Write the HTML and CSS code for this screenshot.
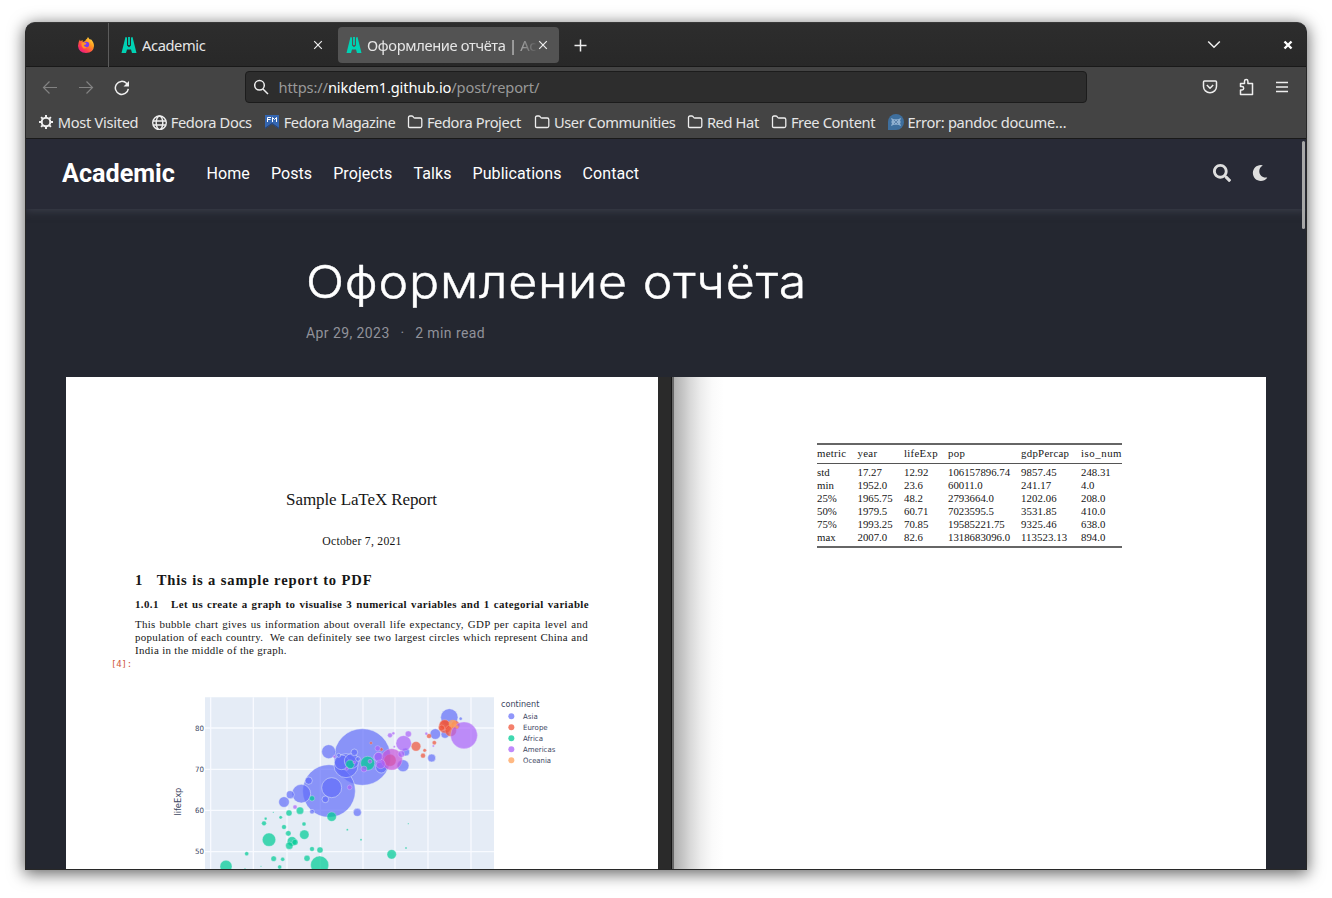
FILE: index.html
```html
<!DOCTYPE html>
<html lang="en">
<head>
<meta charset="utf-8">
<title>Оформление отчёта | Academic</title>
<link rel="stylesheet" href="styles.css">
</head>
<body>
<svg class="defs" width="0" height="0">
  <symbol id="logo" viewBox="0 0 16 18"><path fill="#00d2b4" d="M4.500 1 .5 17H5l1-3.500h4l1 3.500h4.500L11.500 1 10 1.500v8L8 11.200 6 9.500v-8zM7.100 1h1.800v8H7.100z"/></symbol>
  <symbol id="folder" viewBox="0 0 16 16"><path fill="none" stroke="#eee" stroke-width="1.300" stroke-linejoin="round" d="M1.500 12.500V3.500q0-1.500 1.500-1.500h2q1 0 1.500 1.300.3.700 1.200.7h5.600q1.500 0 1.500 1.500v6.500q0 1.500-1.500 1.500H2.800q-1.300 0-1.300-1z"/></symbol>
</svg>
<div class="window">
  <div class="tabs">
    <div class="pinned">
      <svg width="18" height="18" viewBox="0 0 18 18"><defs><linearGradient id="fx" x1="1" y1="0" x2=".2" y2="1"><stop offset="0" stop-color="#fff34f"/><stop offset=".4" stop-color="#ff9a1f"/><stop offset=".75" stop-color="#ff3d4f"/><stop offset="1" stop-color="#e6188c"/></linearGradient></defs><path fill="url(#fx)" d="M11 1q1 2 2.500 3V2.800Q17 6 17 10q-.5 7-8 7-7.500-.5-8-7Q1 6 3 3.500l.5 1.800L5.500 4l.3 2Q9 5 9 3.500 10 3 11 1z"/><circle cx="9.400" cy="8.500" r="2.800" fill="#7b3df0"/><path fill="#ff9425" d="M4.500 7q3.300-1 5 .5Q8.500 9 6.800 9q.5 2.500 3 2Q8 13.500 6 12q-2-2-1.500-5z"/></svg>
    </div>
    <div class="tab"><svg width="16" height="18"><use href="#logo"/></svg><span class="tab-label">Academic</span><svg class="x" width="10" height="10" viewBox="0 0 10 10"><path d="M1.200 1.200l7.600 7.600M8.800 1.200 1.200 8.800"/></svg></div>
    <div class="tab active"><svg width="16" height="18"><use href="#logo"/></svg><span class="tab-label fade">Оформление отчёта | Academic</span><svg class="x" width="10" height="10" viewBox="0 0 10 10"><path d="M1.200 1.200l7.600 7.600M8.800 1.200 1.200 8.800"/></svg></div>
    <svg class="plus" width="13" height="13" viewBox="0 0 13 13"><path d="M6.500.5v12M.5 6.500h12"/></svg>
    <svg class="chev" width="14" height="9" viewBox="0 0 14 9"><path d="M1.200 1.500 7 7.200l5.800-5.700"/></svg>
    <svg class="close" width="10" height="10" viewBox="0 0 10 10"><path d="M1.500 1.500l7 7M8.500 1.500l-7 7"/></svg>
  </div>
  <div class="toolbar">
    <svg class="nav dim" width="16" height="16" viewBox="0 0 16 16"><path d="M15 8.500H1.500M7.500 2.500l-6 6 6 6"/></svg>
    <svg class="nav dim" width="16" height="16" viewBox="0 0 16 16"><path d="M1 8.500h13.500M8.500 2.500l6 6-6 6"/></svg>
    <svg class="nav reload" width="16" height="17" viewBox="0 0 16 17"><path d="M14.300 9.800A6.500 6.500 0 1 1 12.500 4.300L14.300 6"/><path class="solid" d="M15 2v5.500H9.500z"/></svg>
    <div class="url"><svg width="16" height="16" viewBox="0 0 16 16"><circle cx="5.500" cy="6.300" r="4.800"/><path d="m9 10 5 5"/></svg><span class="address">https://<b>nikdem1.github.io</b>/post/report/</span></div>
    <div class="actions">
      <svg width="16" height="16" viewBox="0 0 16 16"><path d="M2.500 2h11q1 0 1 1v4.500a6.500 6.200 0 0 1-13 0V3q0-1 1-1zM4.800 6 8 9.200 11.200 6"/></svg>
      <svg width="16" height="18" viewBox="0 0 16 18"><path d="M1.500 16.500V12H3a1.700 1.700 0 0 0 0-3.400H1.500V5.500h4V3.200a1.700 1.700 0 0 1 3.400 0v2.300h4.600v11z"/></svg>
      <svg width="14" height="14" viewBox="0 0 14 14"><path d="M1 2.500h12M1 7h12M1 11.500h12"/></svg>
    </div>
  </div>
  <div class="bookmarks">
    <span><svg width="16" height="16" viewBox="0 0 16 16"><g stroke="#eee" fill="none"><circle cx="8" cy="8" r="4.300" stroke-width="2"/><path stroke-width="2" d="M8 1v3M8 12v3M1 8h3M12 8h3M3.100 3.100l2 2M10.900 10.900l2 2M3.100 12.900l2-2M10.900 5.100l2-2"/></g></svg>Most Visited</span>
    <span><svg width="16" height="16" viewBox="0 0 16 16"><g stroke="#eee" fill="none" stroke-width="1.400"><circle cx="8.500" cy="8.800" r="6.800"/><ellipse cx="8.500" cy="8.800" rx="3.300" ry="6.800"/><path d="M2 7h13M2 11h13"/></g></svg>Fedora Docs</span>
    <span><svg width="16" height="16" viewBox="0 0 16 16"><path fill="#3566b0" d="M1 1h14v14l-7-5-7 5z"/><path fill="#26406e" d="m1 15 7-5 7 5v-1.300L8 9l-7 4.700z"/><path fill="none" stroke="#fff" d="M3.500 8V3.500H7M3.500 5.500h3M8.500 8V3.500l2 2 2-2V8"/></svg>Fedora Magazine</span>
    <span><svg width="16" height="16"><use href="#folder"/></svg>Fedora Project</span>
    <span><svg width="16" height="16"><use href="#folder"/></svg>User Communities</span>
    <span><svg width="16" height="16"><use href="#folder"/></svg>Red Hat</span>
    <span><svg width="16" height="16"><use href="#folder"/></svg>Free Content</span>
    <span><svg width="16" height="16" viewBox="0 0 16 16"><path fill="#3e6f9e" d="M0 16V8a8 8 0 1 1 8 8z"/><path fill="#8fb0d0" d="m3 4 3 1.200h4L13 4l-1 3 1 1-1 1 1 3-3-1.200H6L3 12l1-3-1-1 1-1z"/><path stroke="#47709c" fill="none" stroke-width=".7" d="m6 6 4 4m0-4-4 4"/></svg>Error: pandoc docume…</span>
  </div>
  <div class="page">
    <nav class="site">
      <strong>Academic</strong>
      <a>Home</a><a>Posts</a><a>Projects</a><a>Talks</a><a>Publications</a><a>Contact</a>
      <svg class="search" width="18" height="18" viewBox="0 0 512 512"><path fill="#dedede" d="M505 442.700 405.300 343c-4.500-4.500-10.600-7-17-7H372c27.600-35.300 44-79.700 44-128C416 93.100 322.900 0 208 0S0 93.100 0 208s93.100 208 208 208c48.300 0 92.700-16.400 128-44v16.300c0 6.400 2.500 12.500 7 17l99.700 99.700c9.400 9.400 24.600 9.400 33.900 0l28.300-28.300c9.400-9.400 9.400-24.600.1-34zM208 336c-70.700 0-128-57.200-128-128 0-70.700 57.200-128 128-128 70.700 0 128 57.200 128 128 0 70.700-57.200 128-128 128z"/></svg>
      <svg class="moon" width="18" height="18" viewBox="0 0 512 512"><path fill="#dedede" d="M283.200 512c79 0 151.100-35.900 198.900-94.800 7.100-8.700-.6-21.400-11.600-19.400-124.200 23.700-238.300-71.600-238.300-197 0-72.200 38.700-138.600 101.500-174.400 9.700-5.500 7.300-20.200-3.800-22.200A258.200 258.200 0 0 0 283.200 0c-141.300 0-256 114.500-256 256 0 141.300 114.500 256 256 256z"/></svg>
    </nav>
    <header class="article">
      <h1>Оформление отчёта</h1>
      <div class="meta"><span>Apr 29, 2023</span><span class="dot">·</span><span>2 min read</span></div>
    </header>
    <div class="featured">
      <section class="sheet">
        <div class="doc-title"><span>Sample LaTeX Report</span></div>
        <div class="doc-date"><span>October 7, 2021</span></div>
        <h2><i>1</i>This is a sample report to PDF</h2>
        <h3><i>1.0.1</i><span>Let us create a graph to visualise 3 numerical variables and 1 categorial variable</span></h3>
        <div class="para"><p>This bubble chart gives us information about overall life expectancy, GDP per capita level and</p><p>population of each country.&nbsp; We can definitely see two largest circles which represent China and</p><p class="last">India in the middle of the graph.</p></div>
        <div class="cell">[4]:</div>
        <svg class="chart" width="410" height="184" viewBox="0 0 1230 552">
          <path fill="#e5ecf6" d="M135 37h867v515H135z"/>
          <path fill="none" stroke="#f8faff" stroke-width="4" d="M152 37v515M280 37v515M381 37v515M481 37v515M609 37v515M705 37v515M804 37v515M933 37v515M135 129h867M135 253h867M135 376h867M135 500h867"/>
          <g fill="#636efa" fill-opacity=".7" stroke="#e5ecf6" stroke-width="1.500">
            <circle cx="607" cy="216" r="85"/><circle cx="507" cy="318" r="79"/><circle cx="515" cy="308" r="30"/><circle cx="506" cy="200" r="21"/><circle cx="558" cy="242" r="36"/><circle cx="545" cy="232" r="22"/><circle cx="575" cy="228" r="22"/><circle cx="583" cy="202" r="10"/><circle cx="424" cy="326" r="28"/><circle cx="446" cy="287" r="11"/><circle cx="391" cy="329" r="12"/><circle cx="372" cy="351" r="16"/><circle cx="496" cy="343" r="10"/><circle cx="456" cy="380" r="7"/><circle cx="592" cy="382" r="12"/><circle cx="868" cy="97" r="26"/><circle cx="826" cy="147" r="16"/><circle cx="815" cy="219" r="12"/><circle cx="729" cy="242" r="18"/><circle cx="664" cy="247" r="17"/><circle cx="657" cy="217" r="15"/><circle cx="737" cy="201" r="12"/><circle cx="855" cy="148" r="12"/><circle cx="902" cy="101" r="5"/><circle cx="536" cy="211" r="6"/><circle cx="594" cy="222" r="7"/>
          </g>
          <g fill="#00cc96" fill-opacity=".72" stroke="#e5ecf6" stroke-width="1">
            <circle cx="198" cy="544" r="18"/><circle cx="260" cy="506" r="6"/><circle cx="327" cy="464" r="20"/><circle cx="312" cy="415" r="7"/><circle cx="317" cy="401" r="4"/><circle cx="340" cy="382" r="2"/><circle cx="362" cy="397" r="5"/><circle cx="387" cy="384" r="9"/><circle cx="420" cy="377" r="11"/><circle cx="372" cy="426" r="7"/><circle cx="385" cy="445" r="8"/><circle cx="396" cy="469" r="14"/><circle cx="388" cy="482" r="11"/><circle cx="405" cy="472" r="9"/><circle cx="433" cy="449" r="14"/><circle cx="432" cy="417" r="6"/><circle cx="456" cy="340" r="8"/><circle cx="515" cy="395" r="14"/><circle cx="341" cy="521" r="8"/><circle cx="368" cy="523" r="6"/><circle cx="359" cy="546" r="6"/><circle cx="441" cy="520" r="9"/><circle cx="456" cy="492" r="7"/><circle cx="480" cy="495" r="9"/><circle cx="479" cy="540" r="27"/><circle cx="562" cy="434" r="3"/><circle cx="603" cy="464" r="3"/><circle cx="570" cy="238" r="13"/><circle cx="623" cy="235" r="21"/><circle cx="695" cy="508" r="14"/><circle cx="738" cy="489" r="3"/><circle cx="745" cy="416" r="2"/><circle cx="303" cy="544" r="2"/><circle cx="255" cy="551" r="2"/>
          </g>
          <g fill="#ef553b" fill-opacity=".72" stroke="#f3c9c4" stroke-width="1">
            <circle cx="855" cy="125" r="19"/><circle cx="854" cy="119" r="15"/><circle cx="872" cy="137" r="17"/><circle cx="886" cy="120" r="13"/><circle cx="768" cy="184" r="14"/><circle cx="807" cy="153" r="7"/><circle cx="823" cy="173" r="6"/><circle cx="794" cy="196" r="5"/><circle cx="789" cy="212" r="7"/><circle cx="664" cy="193" r="5"/><circle cx="633" cy="174" r="4"/><circle cx="845" cy="129" r="9"/><circle cx="690" cy="226" r="18"/>
          </g>
          <g fill="#ab63fa" fill-opacity=".7" stroke="#e5d4fa" stroke-width="1">
            <circle cx="912" cy="151" r="40"/><circle cx="731" cy="175" r="23"/><circle cx="695" cy="223" r="32" fill="#c653dc"/><circle cx="745" cy="147" r="9"/><circle cx="690" cy="151" r="7"/><circle cx="700" cy="145" r="4"/><circle cx="724" cy="207" r="10"/><circle cx="662" cy="237" r="14"/><circle cx="655" cy="215" r="13"/><circle cx="653" cy="190" r="8"/><circle cx="612" cy="252" r="9"/><circle cx="630" cy="229" r="6"/><circle cx="569" cy="307" r="7"/><circle cx="523" cy="215" r="4"/><circle cx="405" cy="366" r="6"/><circle cx="583" cy="232" r="4"/><circle cx="799" cy="146" r="4"/><circle cx="820" cy="183" r="3"/><circle cx="703" cy="185" r="3"/><circle cx="560" cy="251" r="5"/>
          </g>
          <g fill="#ffa15a" fill-opacity=".8"><circle cx="878" cy="116" r="12"/><circle cx="891" cy="126" r="5"/></g>
          <g class="ticks"><text x="105" y="137" textLength="27" lengthAdjust="spacingAndGlyphs">80</text><text x="105" y="260" textLength="27" lengthAdjust="spacingAndGlyphs">70</text><text x="105" y="383" textLength="27" lengthAdjust="spacingAndGlyphs">60</text><text x="105" y="507" textLength="27" lengthAdjust="spacingAndGlyphs">50</text></g>
          <text class="axis" transform="translate(62 392) rotate(-90)" textLength="84" lengthAdjust="spacingAndGlyphs">lifeExp</text>
          <text class="legend-title" x="1023" y="67" textLength="115" lengthAdjust="spacingAndGlyphs">continent</text>
          <g class="legend"><text x="1089" y="101" textLength="44" lengthAdjust="spacingAndGlyphs">Asia</text><text x="1089" y="134" textLength="74" lengthAdjust="spacingAndGlyphs">Europe</text><text x="1089" y="167" textLength="60" lengthAdjust="spacingAndGlyphs">Africa</text><text x="1089" y="200" textLength="97" lengthAdjust="spacingAndGlyphs">Americas</text><text x="1089" y="233" textLength="84" lengthAdjust="spacingAndGlyphs">Oceania</text></g>
          <circle cx="1054" cy="94" r="9" fill="#9197fa"/><circle cx="1054" cy="127" r="9" fill="#f4806c"/><circle cx="1054" cy="160" r="9" fill="#40d8b0"/><circle cx="1054" cy="193" r="9" fill="#c08afb"/><circle cx="1054" cy="226" r="9" fill="#ffb983"/>
        </svg>
      </section>
      <div class="gutter"></div>
      <section class="sheet right">
        <table>
          <thead><tr><th>metric</th><th>year</th><th>lifeExp</th><th>pop</th><th>gdpPercap</th><th>iso_num</th></tr></thead>
          <tbody>
            <tr><td>std</td><td>17.27</td><td>12.92</td><td>106157896.74</td><td>9857.45</td><td>248.31</td></tr>
            <tr><td>min</td><td>1952.0</td><td>23.6</td><td>60011.0</td><td>241.17</td><td>4.0</td></tr>
            <tr><td>25%</td><td>1965.75</td><td>48.2</td><td>2793664.0</td><td>1202.06</td><td>208.0</td></tr>
            <tr><td>50%</td><td>1979.5</td><td>60.71</td><td>7023595.5</td><td>3531.85</td><td>410.0</td></tr>
            <tr><td>75%</td><td>1993.25</td><td>70.85</td><td>19585221.75</td><td>9325.46</td><td>638.0</td></tr>
            <tr><td>max</td><td>2007.0</td><td>82.6</td><td>1318683096.0</td><td>113523.13</td><td>894.0</td></tr>
          </tbody>
        </table>
      </section>
    </div>
    <div class="scrollbar"></div>
  </div>
</div>
</body>
</html>
```

FILE: styles.css
```css
* { box-sizing: border-box; }
body { margin: 0; height: 898px; overflow: hidden; background: #fff; padding: 22px 25px; font-family: "Noto Sans", sans-serif; }
svg { display: block; flex: none; }
.defs { position: absolute; }
.window { width: 1282px; height: 848px; border: 1px solid #282828; border-top-color: #383838; border-radius: 10px 10px 0 0; overflow: hidden; background: #232630; box-shadow: 0 3px 16px 1px rgba(0,0,0,.6); }

.tabs { height: 44px; display: flex; align-items: center; background: linear-gradient(#2d2d2d, #282828); border-bottom: 1px solid #191919; color: #e6e6e6; font-size: 14.67px; }
.pinned { width: 83px; height: 44px; border-right: 1px solid #5c5c5c; display: flex; align-items: center; justify-content: flex-end; padding-right: 13px; }
.tab { width: 221px; height: 36px; padding: 0 7px 0 12px; display: flex; align-items: center; }
.tab:not(.active) { margin-right: 8px; }
.tab.active { background: #535353; border-radius: 4px; padding: 0 11px 0 8px; }
.tab-label { flex: 1; margin-left: 5px; white-space: nowrap; overflow: hidden; letter-spacing: -.38px; }
.fade { letter-spacing: -.34px; -webkit-mask-image: linear-gradient(90deg, #000 82%, transparent 100%); mask-image: linear-gradient(90deg, #000 82%, transparent 100%); }
.x, .plus, .chev, .close { fill: none; stroke: #eee; stroke-width: 1.200; }
.plus { margin: 2px 0 0 15px; }
.plus, .chev { stroke-width: 1.500; }
.chev { margin-left: auto; }
.close { margin: 0 13px 0 62px; stroke-width: 2.400; stroke: #fff; }

.toolbar { height: 40px; background: #444; display: flex; align-items: center; padding-left: 16px; }
.nav { fill: none; stroke: #f0f0f0; stroke-width: 1.500; margin-right: 20px; }
.dim { stroke: #828282; stroke-width: 1.200; }
.nav .solid { fill: #f0f0f0; stroke: none; }
.url { margin-left: 95px; width: 842px; height: 32px; border: 1px solid #1c1c1c; border-radius: 4px; background: #2d2d2d; display: flex; align-items: center; padding-left: 8px; }
.url svg { fill: none; stroke: #eee; stroke-width: 1.500; }
.address { margin-left: 8.500px; font-size: 14.67px; letter-spacing: -.14px; color: #999; white-space: nowrap; }
.address b { font-weight: 400; color: #fff; }
.actions { margin: 0 17px 0 auto; display: flex; align-items: center; gap: 20.500px; }
.actions svg { fill: none; stroke: #eee; stroke-width: 1.500; stroke-linejoin: round; }

.bookmarks { height: 32px; background: #444; border-bottom: 1px solid #191919; display: grid; grid-template-columns: 113px 113px 143.200px 127px 153px 84px 116.500px 200px; padding: 0 0 2px 12px; color: #e6e6e6; font-size: 14.67px; }
.bookmarks span { display: flex; align-items: center; gap: 3.700px; white-space: nowrap; letter-spacing: -.38px; }
.bookmarks span:first-child, .bookmarks span:last-child { letter-spacing: -.3px; }
.bookmarks span:nth-child(3) { letter-spacing: -.45px; }

.page { height: 730px; position: relative; overflow: hidden; background: #242730; font-family: Roboto, sans-serif; }
.site { height: 70px; background: #282a36; box-shadow: 0 2px 8px #3b3e4a; display: flex; align-items: center; padding: 0 38px 2px 36px; color: #fff; font-size: 16px; letter-spacing: .08px; }
.site strong { font-size: 25.200px; line-height: 30px; padding-top: 1px; font-weight: 700; margin-right: 31.500px; width: 113px; letter-spacing: 0; }
.site a { margin-right: 21px; }
.search { margin-left: auto; margin-right: 21px; }
.moon { width: 16px; height: 16px; }
.article { padding: 41px 0 0 280px; color: #fff; }
h1 { margin: 0; width: 460px; font: 300 45.500px/64px Inter, sans-serif; white-space: nowrap; letter-spacing: .7px; -webkit-text-stroke: .45px #fff; transform: scaleX(1.102); transform-origin: 0 0; }
.meta { margin-top: 9px; font-size: 14px; line-height: 20px; letter-spacing: .42px; color: #91929a; }
.dot { margin: 0 10.700px; }
.featured { margin: 34px 40px 0; width: 1200px; height: 492px; display: grid; grid-template-columns: 592px 16px 592px; }
.gutter { background: linear-gradient(90deg, #2a2a2a 80%, #151515 81%, #151515 88%, #666 90%); }
.sheet { background: #fff; color: #161616; font-family: "Liberation Serif", serif; overflow: hidden; }
.doc-title { margin-top: 112px; height: 22px; line-height: 21px; text-align: center; font-size: 17px; letter-spacing: -.1px; }
.doc-title span { margin-right: 1px; }
.doc-date { margin-top: 22px; height: 18px; line-height: 18px; text-align: center; font-size: 11.700px; letter-spacing: .25px; }
.sheet i { font-style: normal; }
h2 { margin: 19px 0 0 69px; height: 20px; font: 700 14.600px/20px "Liberation Serif", serif; white-space: nowrap; letter-spacing: .85px; }
h2 i { margin-right: 13.500px; }
h3 { margin: 7px 0 0 69px; width: 454px; height: 14px; display: flex; font: 700 10.900px/14px "Liberation Serif", serif; white-space: nowrap; letter-spacing: .4px; }
h3 i { width: 36px; }
h3 span { flex: 1; text-align-last: justify; }
.para { margin: 7px 0 0 69px; width: 453px; font-size: 10.900px; line-height: 13.200px; letter-spacing: .3px; }
.para p { margin: 0; text-align-last: justify; white-space: nowrap; }
.para .last { text-align-last: left; letter-spacing: .34px; }
.cell { margin: -1px 0 0 45px; height: 14px; color: #d0573c; font: 9px/14px "DejaVu Sans Mono", monospace; letter-spacing: -.2px; }
.chart { margin: 14px 0 0 94px; font-family: "DejaVu Sans", sans-serif; fill: #3c465f; }
.ticks, .legend { font-size: 22px; }
.axis, .legend-title { font-size: 25px; }
.right { background: linear-gradient(90deg, #b0b0b0, #c8c8c8 10px, #d8d8d8 16px, #ededed 27px, #fafafa 38px, #fff 50px); }
table { margin: 66px 0 0 143px; width: 305px; table-layout: fixed; border-collapse: collapse; border-top: 2px solid #666; border-bottom: 2px solid #666; font-size: 10.800px; line-height: 13px; }
th, td { padding: 0; font-weight: 400; text-align: left; white-space: nowrap; height: 13.200px; }
td:nth-child(5) { letter-spacing: .08px; }
th { height: 19px; border-bottom: 1px solid #555; letter-spacing: .3px; }
th:last-child { letter-spacing: .55px; }
th:nth-child(1) { width: 40.500px; }
th:nth-child(2) { width: 46.500px; }
th:nth-child(3) { width: 44px; }
th:nth-child(4) { width: 73px; }
th:nth-child(5) { width: 60px; }
tbody tr:first-child td { padding-top: 2px; height: 15px; }
tbody tr:last-child td { padding-bottom: 2px; height: 15px; }
.scrollbar { position: absolute; right: 1px; top: 2px; width: 3px; height: 88px; border-radius: 2px; background: #a7a7a7; }
```
